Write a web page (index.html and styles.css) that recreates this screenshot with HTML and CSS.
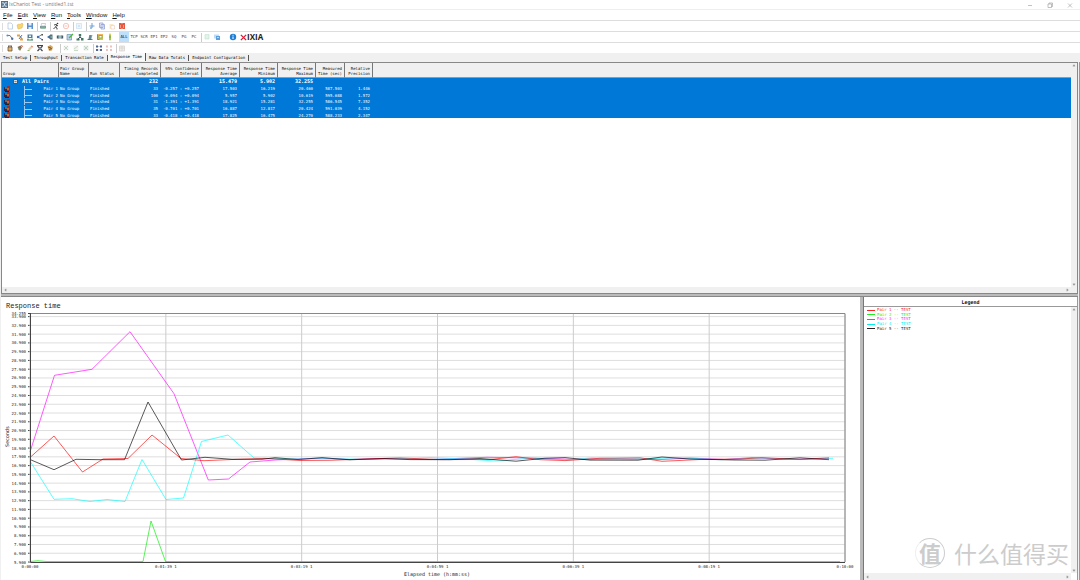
FILE: index.html
```html
<!DOCTYPE html>
<html lang="en">
<head>
<meta charset="utf-8">
<title>IxChariot Test - untitled1.tst</title>
<link rel="stylesheet" href="styles.css">
</head>
<body>
<div class="app">
  <header class="titlebar">
    <svg class="app-icon" viewBox="0 0 8 8"><rect width="8" height="8" fill="#5d7f9e"/><path d="M1 2h2l1 2 1-2h2M1 6h2l1-2 1 2h2" stroke="#fff" fill="none" stroke-width=".8"/><path d="M0 0h8v8H0z" fill="none" stroke="#2e5f8c" stroke-width=".8"/></svg>
    <span class="title">IxChariot Test - untitled1.tst</span>
    <div class="window-controls">
      <button aria-label="Minimize"><svg viewBox="0 0 8 8"><path d="M2 4.5h4"/></svg></button>
      <button aria-label="Restore"><svg viewBox="0 0 8 8"><path d="M2 3h3.5v3.500H2zM3 3V2h3.500v3.500h-1"/></svg></button>
      <button aria-label="Close"><svg viewBox="0 0 8 8"><path d="M2 2.500l4 4M6 2.500l-4 4"/></svg></button>
    </div>
  </header>

  <nav class="menubar">
    <button><u>F</u>ile</button><button><u>E</u>dit</button><button><u>V</u>iew</button><button><u>R</u>un</button><button><u>T</u>ools</button><button><u>W</u>indow</button><button><u>H</u>elp</button>
  </nav>

  <div class="toolbar">
    <button aria-label="New"><svg viewBox="0 0 8 8"><path d="M2 1h3l1.500 1.500V7H2z" fill="#fff" stroke="#a9c0dc" stroke-width=".7"/></svg></button>
    <button aria-label="Open"><svg viewBox="0 0 8 8"><path d="M1 3l2-1 1 .5 2-1.500 1 1-1 4-4 1z" fill="#f6d573" stroke="#e0b040" stroke-width=".5"/></svg></button>
    <button aria-label="Save"><svg viewBox="0 0 8 8"><path d="M1 1h6v6H1z" fill="#5b8fd0"/><path d="M2.500 1h3v2.500h-3zM2.500 5h3v2h-3z" fill="#e8f0fa"/></svg></button>
    <i class="sep"></i>
    <button aria-label="Print"><svg viewBox="0 0 8 8"><path d="M1 4h6v2.500H1z" fill="#7f9a97"/><path d="M2.500 1.500h4L6 4H2z" fill="#fff" stroke="#9db3c8" stroke-width=".6"/><path d="M2 6h4" stroke="#6fc28c"/></svg></button>
    <i class="sep"></i>
    <button aria-label="Run"><svg viewBox="0 0 8 8"><circle cx="5.500" cy="1.500" r=".8" fill="#333"/><path d="M2 3l2-.5 1 .5-1.500 2L5 6v1.500M3.500 5L1.500 7M4.500 3l1.500 1" stroke="#333" fill="none" stroke-width=".9"/></svg></button>
    <button aria-label="Stop"><svg viewBox="0 0 8 8"><circle cx="4" cy="4" r="2.700" fill="#fff" stroke="#f7c4bc"/><path d="M2.500 4h3" stroke="#f7c4bc"/></svg></button>
    <i class="sep"></i>
    <button aria-label="Results"><svg viewBox="0 0 8 8"><path d="M1.500 1.500h5v5h-5zM3 3l2 2M5 3L3 5" fill="#eef5fc" stroke="#c9def2" stroke-width=".7"/></svg></button>
    <i class="sep"></i>
    <button aria-label="Cut"><svg viewBox="0 0 8 8"><path d="M4 1v5M1.500 4h5" stroke="#6f9fd8" fill="none"/><circle cx="3" cy="6" r="1" fill="#7bb0dd"/></svg></button>
    <button aria-label="Copy"><svg viewBox="0 0 8 8"><path d="M1.500 1h3.500v4.500H1.500zM3 2.500h3.500V7H3z" fill="#e9eefb" stroke="#8b95d0" stroke-width=".7"/></svg></button>
    <button aria-label="Paste"><svg viewBox="0 0 8 8"><path d="M1.500 2h4v5h-4z" fill="#fbe8c9"/><path d="M3 3.500h3.500V7H3z" fill="#fff" stroke="#e9c9bb" stroke-width=".6"/></svg></button>
    <button aria-label="Delete"><svg viewBox="0 0 8 8"><path d="M1 1h2.500l.5 1 .5-1H7v6H4.500L4 6l-.5 1H1z" fill="#e8583f"/><path d="M2.500 3v3M5.500 3v3" stroke="#f8b5a6" stroke-width=".7"/></svg></button>
  </div>

  <div class="toolbar">
    <button aria-label="Add pair"><svg viewBox="0 0 8 8"><path d="M1 2.500h3l2 3" fill="none" stroke="#777"/><circle cx="1.500" cy="2.500" r="1.100" fill="#5b8fd0"/><circle cx="6.200" cy="5.800" r="1.200" fill="#4b6fa5"/></svg></button>
    <button aria-label="Add VoIP pair"><svg viewBox="0 0 8 8"><path d="M1 1.500h3v2H1z" fill="#e9a23a"/><path d="M4 3l2 3M3 6l3-4" stroke="#5078ae"/><path d="M4 5.500h3v2H4z" fill="#e9a23a"/></svg></button>
    <button aria-label="Add video pair"><svg viewBox="0 0 8 8"><path d="M1.500 1.500h5V5h-5z" fill="#587b9c"/><path d="M3 2.500h2v1.500H3z" fill="#dff"/><path d="M2 7V5.500M6 7V5.500M1 7h6" stroke="#398259"/></svg></button>
    <button aria-label="Add multicast group"><svg viewBox="0 0 8 8"><path d="M6 1.500L2 4l4 2.500" fill="none" stroke="#69829d"/><circle cx="2" cy="4" r="1.200" fill="#446fae"/><path d="M5.500 1h1.500v1.500H5.500zM5.500 6H7v1.500H5.500z" fill="#555"/></svg></button>
    <button aria-label="Add video group"><svg viewBox="0 0 8 8"><path d="M1 4l3-2v4z" fill="#3d6fa5"/><path d="M4 1.500h2.500v5H4z" fill="#5a6f78"/><path d="M4.500 4h2" stroke="#8fe0c3"/></svg></button>
    <button aria-label="Add IPTV pair"><svg viewBox="0 0 8 8"><rect x=".8" y="2.500" width="2.800" height="3" fill="#46596e"/><rect x="4.400" y="2.500" width="2.800" height="3" fill="#46596e"/><path d="M2 4h4" stroke="#a6ecd1" stroke-width=".8"/></svg></button>
    <button aria-label="Edit pair"><svg viewBox="0 0 8 8"><path d="M1 1.500h4.500V7H1z" fill="#bcd5ea" stroke="#5487ac" stroke-width=".6"/><path d="M3 5l4-4" stroke="#51b53a" stroke-width="1.300"/></svg></button>
    <button aria-label="Replicate"><svg viewBox="0 0 8 8"><path d="M4 1v3L1.500 6.500M4 4l3 2.500" fill="none" stroke="#344c63"/><path d="M.5 5.500h3v2h-3zM5 5h2.500v2.500H5zM2.800 1h2.400v2H2.800z" fill="#3e785e"/></svg></button>
    <button aria-label="Swap endpoints"><svg viewBox="0 0 8 8"><path d="M2 7l1.500-5h3L5 7z" fill="#7aa7a2"/><path d="M1.500 6.500h5M4 2v4" stroke="#456087" stroke-width=".8"/></svg></button>
    <button aria-label="Scripts"><svg viewBox="0 0 8 8"><path d="M1 1h6v6H1z" fill="#f2b65d"/><path d="M2.500 2h4v3.500h-4z" fill="#64c84d"/><path d="M3.500 3h2v1.500h-2z" fill="#fff"/><path d="M1.500 1.500v5h2" stroke="#e84f59" stroke-width=".8" fill="none"/></svg></button>
    <button aria-label="Advice"><svg viewBox="0 0 8 8"><path d="M4 .8v6.500" stroke="#9bc03f" stroke-width="1.800"/><path d="M3.500 4h1" stroke="#597b28"/><path d="M3.500 1.500h1" stroke="#ffe27a"/></svg></button>
    <div class="filters">
      <button class="filter active">ALL</button><button class="filter">TCP</button><button class="filter">SCR</button><button class="filter">EP1</button><button class="filter">EP2</button><button class="filter">SQ</button><button class="filter">PG</button><button class="filter">PC</button>
    </div>
    <i class="sep"></i>
    <button aria-label="Collapse"><svg viewBox="0 0 8 8"><path d="M2 1.500h4V6H2z" fill="#e2f3e8" stroke="#bfe0d2" stroke-width=".6"/></svg></button>
    <button aria-label="Expand"><svg viewBox="0 0 8 8"><path d="M1 1.500h5v4H1z" fill="#bfdcf5"/><path d="M3 3h4v4H3z" fill="#5b9fe0"/><path d="M4 4.500h2" stroke="#fff" stroke-width=".6"/></svg></button>
    <div class="brand">
      <button aria-label="About"><svg viewBox="0 0 8 8"><circle cx="4" cy="4" r="3.200" fill="#1f7fd6"/><path d="M4 3.500V6M4 1.800v1" stroke="#fff"/></svg></button>
      <span class="ixia"><svg viewBox="0 0 8 8"><path d="M1 1l6 6M7 1L1 7" stroke="#d9203a" stroke-width="1.600"/></svg>IXIA</span>
    </div>
  </div>

  <div class="toolbar last">
    <button aria-label="Hold"><svg viewBox="0 0 8 8"><path d="M2 3h4v4H2z" fill="#e6b56b" stroke="#5a4630" stroke-width=".7"/><path d="M2.500 3V1.500M4 3V1M5.500 3V1.500" stroke="#5a4630" stroke-width=".8"/></svg></button>
    <button aria-label="Release"><svg viewBox="0 0 8 8"><path d="M1.500 3l3-1.500 1.500 2L4 7z" fill="#8d6f4e"/><path d="M5 1.500l2 1" stroke="#e25745"/><path d="M2 5h2" stroke="#54a368"/></svg></button>
    <button aria-label="Mark"><svg viewBox="0 0 8 8"><path d="M2 5l3-3 1.500 1.500-3 3z" fill="#e6d2b0"/><path d="M5 2l2 1" stroke="#e47b5e"/><path d="M1.500 6.500h2" stroke="#90b570"/></svg></button>
    <button aria-label="Unmark all"><svg viewBox="0 0 8 8"><path d="M1 1.500h6M1.500 2l5 5M6.500 2l-5 5" stroke="#44423f" stroke-width="1.200"/><circle cx="4" cy="4.500" r="1.200" fill="#7b8fa5"/></svg></button>
    <button aria-label="Mark all"><svg viewBox="0 0 8 8"><path d="M1.500 2.500l3-1.500 2.500 2-1 3.500-3 .5z" fill="#d9a75b"/><path d="M2 3l3 1M3 5.500l3-1" stroke="#674a31" stroke-width=".8"/></svg></button>
    <i class="sep wide"></i>
    <button aria-label="Check"><svg viewBox="0 0 8 8"><path d="M1.500 1.500h5v5h-5z" fill="#f1f4f1"/><path d="M2 2l4 4M6 2L2 6" stroke="#b9cfbd" stroke-width=".8"/></svg></button>
    <button aria-label="Validate"><svg viewBox="0 0 8 8"><path d="M1.500 1.500h5v5h-5z" fill="#f1f4f1"/><path d="M2 5l4-3M2 6.500h4" stroke="#bcd3bd" stroke-width=".8"/></svg></button>
    <button aria-label="Verify"><svg viewBox="0 0 8 8"><path d="M1.500 1.500h5v5h-5z" fill="#e8efe8"/><path d="M2 2l4 4M6 2L2 6" stroke="#b3ccb5" stroke-width=".8"/></svg></button>
    <i class="sep"></i>
    <button aria-label="Group"><svg viewBox="0 0 8 8"><path d="M1 1.500h2v2H1zM5 1.500h2v2H5zM1 5h2v2H1zM5 5h2v2H5z" fill="#52658f"/><path d="M3 2.500h2M3 6h2" stroke="#9fb0cf" stroke-width=".6"/></svg></button>
    <button aria-label="Ungroup"><svg viewBox="0 0 8 8"><path d="M1 1.500h2v2H1zM5 1.500h2v2H5zM1 5h2v2H1zM5 5h2v2H5z" fill="#ecc2bd"/></svg></button>
    <i class="sep"></i>
    <button aria-label="Columns"><svg viewBox="0 0 8 8"><path d="M1.500 2h5v5h-5zM1.500 4h5M4 2v5" fill="#f1efec" stroke="#d3d0cc" stroke-width=".7"/></svg></button>
  </div>

  <nav class="tabs">
    <button>Test Setup</button><button>Throughput</button><button>Transaction Rate</button><button class="current">Response Time</button><button>Raw Data Totals</button><button>Endpoint Configuration</button>
  </nav>

  <main class="workspace">
    <section class="results">
      <div class="results-view">
        <table class="pairs">
          <colgroup><col class="c-group"><col class="c-name"><col class="c-status"><col class="c-records"><col class="c-ci"><col class="c-rt"><col class="c-rt"><col class="c-rt"><col class="c-time"><col class="c-prec"><col></colgroup>
          <thead>
            <tr><th class="left">Group</th><th class="left">Pair Group<br>Name</th><th class="left">Run Status</th><th>Timing Records<br>Completed</th><th>95% Confidence<br>Interval</th><th>Response Time<br>Average</th><th>Response Time<br>Minimum</th><th>Response Time<br>Maximum</th><th>Measured<br>Time (sec)</th><th>Relative<br>Precision</th><th class="rest"></th></tr>
          </thead>
          <tbody id="pair-rows">
            <tr class="total"><td class="left"><div class="all"><span class="toggle">−</span>All Pairs</div></td><td></td><td></td><td>232</td><td></td><td>15.479</td><td>5.902</td><td>32.255</td><td></td><td></td><td></td></tr>
          </tbody>
        </table>
      </div>
      <div class="vscroll"><span class="chev up"></span><span class="chev down"></span></div>
      <div class="hscroll"><span class="chev prev"></span><span class="chev next"></span></div>
    </section>
    <div class="splitter"></div>
    <section class="lower">
      <div class="chart-pane">
        <svg class="chart" viewBox="1 297 859 283" preserveAspectRatio="xMinYMin meet" role="img" aria-label="Response time">
          <text class="chart-title" x="6" y="308">Response time</text>
          <g id="grid"></g>
          <path class="axis-light" d="M30 313.500H845V562"/>
          <g id="series"></g>
          <path class="axis" d="M30.500 313V562.500H845"/>
          <text class="axis-title" transform="translate(9 447) rotate(-90)">Seconds</text>
          <text class="axis-title" x="437" y="576" text-anchor="middle">Elapsed time (h:mm:ss)</text>
        </svg>
      </div>
      <div class="vsplitter"></div>
      <aside class="legend">
        <h2>Legend</h2>
        <div class="legend-body">
          <ul>
            <li class="s1">Pair 1 -- TEST</li>
            <li class="s2">Pair 2 -- TEST</li>
            <li class="s3">Pair 3 -- TEST</li>
            <li class="s4">Pair 4 -- TEST</li>
            <li class="s5">Pair 5 -- TEST</li>
          </ul>
        </div>
        <div class="vscroll"><span class="chev up"></span><span class="chev down"></span></div>
        <div class="hscroll"><span class="chev prev"></span><span class="chev next"></span></div>
      </aside>
    </section>
  </main>
  <div class="watermark"><span class="seal">值</span><span>什么值得买</span></div>
</div>
<script src="app.js"></script>
</body>
</html>
```
FILE: styles.css
```css
* { box-sizing: border-box; }
body { margin: 0; font-family: "DejaVu Sans Mono", monospace; font-size: 4px; color: #222; background: #fff; }
button { border: 0; background: none; padding: 0; margin: 0; font: inherit; color: inherit; }
.app { position: relative; display: flex; flex-direction: column; height: 100vh; overflow: hidden; }

.titlebar { display: flex; align-items: center; height: 10px; border-bottom: 1px solid #eee; font: 5px/9px "Open Sans", sans-serif; color: #777; }
.app-icon { width: 7px; height: 7px; margin: 0 1px; }
.window-controls { margin-left: auto; display: flex; gap: 12px; padding-right: 6px; }
.window-controls svg { width: 8px; height: 8px; display: block; fill: none; stroke: #999; stroke-width: .6; }

.menubar { display: flex; gap: 5px; height: 11px; padding-left: 3px; border-bottom: 1px solid #ddd; font: 6px/10px "Liberation Sans", sans-serif; color: #111; }

.toolbar { display: flex; align-items: center; height: 11px; padding-left: 5px; border-bottom: 1px solid #ddd; background: linear-gradient(#ddd, #ddd) 2px 2px / 1px 7px no-repeat; }
.toolbar.last { height: 10px; border-bottom: 0; }
.toolbar button { width: 10px; height: 10px; display: flex; align-items: center; justify-content: center; }
.toolbar button svg { width: 8px; height: 8px; }
.sep { width: 3px; height: 9px; border-right: 1px solid #ccc; }
.sep.wide { width: 6px; }
.filters { display: flex; margin-left: 4px; line-height: 10px; color: #444; }
.filters .active { background: #bfe0fb; color: #000; }
.brand { display: flex; align-items: center; margin-left: 6px; }
.ixia { display: flex; align-items: center; margin-left: 2px; font: bold 8px/10px "Open Sans", sans-serif; color: #222; }
.ixia svg { width: 7px; height: 7px; }

.tabs { display: flex; align-items: center; height: 9px; background: #f0f0f0; color: #000; }
.tabs button { padding: 0 3px; line-height: 6px; border-right: 1px solid #555; }
.tabs .current { align-self: flex-start; height: 8px; background: #f8f8f8; }

.workspace { flex: 1; min-height: 0; display: grid; grid-template-rows: 231fr 4px 283fr; padding: 0 1px; border-right: 1px solid #999; background: #f0f0f0; }
.results { display: grid; grid-template: 1fr 6px / 1fr 6px; min-height: 0; border: 1px solid #888; border-width: 1px 1px 0; }
.results-view { background: #fff; overflow: hidden; }
.splitter { background: #bbb; border: 1px solid #888; border-width: 1px 0; }

.pairs { width: 100%; border-collapse: separate; border-spacing: 0; table-layout: fixed; line-height: 5px; }
.c-group { width: 57px; }
.c-name { width: 30px; }
.c-status { width: 31px; }
.c-records, .c-ci { width: 41px; }
.c-rt { width: 38px; }
.c-time { width: 29px; }
.c-prec { width: 28px; }
.pairs th { height: 15px; padding: 0 2px 1px 1px; vertical-align: bottom; text-align: right; font-weight: normal; white-space: nowrap; background: #f0f0f0; color: #111; border-right: 1px solid #777; border-bottom: 1px solid #999; }
.pairs .rest { border-right: 0; }
.pairs td { height: 7px; padding: 0 3px 0 0; text-align: right; white-space: nowrap; color: #fff; background: #0078d7; }
.pairs tr:nth-child(3n) td { height: 6px; }
.pairs .left { text-align: left; padding: 0 0 1px 1px; }
.pairs td.left { padding-bottom: 0; }
.total { font-size: 5px; font-weight: bold; }
.all { display: flex; align-items: center; padding-left: 10px; gap: 4px; }
.toggle { width: 5px; height: 5px; background: #ddd; color: #222; border: 1px solid #555; font-size: 4px; line-height: 3px; text-align: center; }
.pair { display: flex; align-items: center; padding-left: 1px; height: 6px; }
.pair svg { width: 6px; height: 6px; }
.branch { align-self: stretch; width: 8px; margin-left: 14px; border-left: 1px solid #9cc9ef; background: linear-gradient(#9cc9ef, #9cc9ef) 0 3px / 8px 1px no-repeat; }
.pair .label { margin-left: auto; padding-right: 1px; }

.vscroll, .hscroll { display: flex; align-items: center; justify-content: space-between; background: #f0f0f0; }
.vscroll { flex-direction: column; padding: 2px 0; }
.hscroll { padding: 0 3px; }
.chev { width: 2px; height: 2px; border: solid #999; border-width: 1px 0 0 1px; }
.up { transform: rotate(45deg); }
.down { transform: rotate(225deg); }
.prev { transform: rotate(-45deg); }
.next { transform: rotate(135deg); }

.lower { display: grid; grid-template-columns: 1fr 4px 214px; min-height: 0; }
.chart-pane { background: #fff; min-height: 0; overflow: hidden; }
.chart { display: block; width: 100%; height: 100%; }
.chart text { font-family: "DejaVu Sans Mono", monospace; fill: #222; }
.chart .chart-title { font-family: "Liberation Mono", monospace; font-size: 7px; }
.chart .axis-title { font-size: 5px; }
.chart .tick { font-size: 4px; }
.gridline { stroke: #dedede; }
.gridline.v { stroke: #ccc; }
.axis-light { fill: none; stroke: #888; }
.axis { fill: none; stroke: #444; }
.line { fill: none; stroke-width: 1; stroke-opacity: .65; }
.vsplitter { background: #bbb; border-right: 1px solid #777; }

.legend { display: grid; grid-template: 10px 1fr 7px / 1fr 6px; background: #fff; border-right: 1px solid #999; }
.legend h2 { grid-column: 1 / -1; margin: 0; font: bold 5px/10px "DejaVu Sans Mono", monospace; text-align: center; color: #111; border-bottom: 1px solid #999; }
.legend ul { display: grid; grid-auto-rows: 1fr; height: 23px; margin: 1px 0 0; padding: 0 0 0 3px; list-style: none; }
.legend li { display: flex; align-items: center; gap: 2px; line-height: 4px; stroke: none; }
.legend li::before { content: ""; width: 8px; height: 1px; background: currentColor; }
.s1 { color: #f22; stroke: #f00; }
.s2 { color: #2e2; stroke: #0e0; }
.s3 { color: #f2f; stroke: #f0f; }
.s4 { color: #0ee; stroke: #0ff; }
.s5 { color: #222; stroke: #000; }

.watermark { position: absolute; right: 11px; bottom: 12px; display: flex; align-items: center; gap: 9px; font: 23px/30px "Noto Sans CJK SC", sans-serif; color: #ccc; }
.seal { width: 30px; height: 30px; border: 1px solid #ccc; border-left-color: #eee; border-radius: 50%; font-size: 22px; line-height: 26px; text-align: center; font-weight: bold; }
```
FILE: app.js
```js
const rows = [
  ['33', '-0.257 : +0.257', '17.503', '16.219', '20.460', '587.503', '1.446'],
  ['100', '-0.094 : +0.094', '5.957', '5.902', '10.619', '595.688', '1.572'],
  ['31', '-1.391 : +1.391', '18.921', '15.281', '32.255', '586.545', '7.352'],
  ['35', '-0.701 : +0.701', '16.887', '12.817', '20.424', '591.039', '4.152'],
  ['33', '-0.418 : +0.418', '17.825', '16.475', '24.270', '588.233', '2.347'],
];
const icon = '<svg viewBox="0 0 6 6"><path d="M0 1h3v4H0z" fill="#222a55"/><path d="M3 0h3v5H3z" fill="#a22b2b"/><path d="M1 2h2M3 3h2" stroke="#f0c040" stroke-width=".8"/><path d="M1 5.500h4" stroke="#222"/></svg>';
document.getElementById('pair-rows').insertAdjacentHTML('beforeend', rows.map((r, i) =>
  `<tr><td class="left"><div class="pair">${icon}<span class="branch"></span><span class="label">Pair ${i + 1}</span></div></td>` +
  `<td class="left">No Group</td><td class="left">Finished</td>${r.map(v => `<td>${v}</td>`).join('')}<td></td></tr>`).join(''));

const plotTop = 313.5, plotBottom = 562, maxValue = 34.255, minValue = 5.9;
const toY = v => plotBottom - (v - minValue) * (plotBottom - plotTop) / (maxValue - minValue);
const label = (v, py) => `<text class="tick" x="26" y="${py + 1.5}" text-anchor="end">${v.toFixed(3)}</text><path class="axis" d="M28 ${py}h2"/>`;
let grid = '';
for (let v = minValue; v < maxValue; v += 1) {
  const py = toY(v);
  grid += `<path class="gridline" d="M31 ${py}H845"/>` + label(v, py);
}
grid += label(maxValue, plotTop);
['0:00:00', '0:01:39 1', '0:03:19 1', '0:04:59 1', '0:06:39 1', '0:08:19 1', '0:10:00'].forEach((t, i) => {
  const px = 30 + i * 815 / 6;
  grid += `<path class="gridline v" d="M${px} 314V562"/><text class="tick" x="${px}" y="568" text-anchor="middle">${t}</text>`;
});
document.getElementById('grid').innerHTML = grid;

const series = {
  s2: '30,561.5 38,560.7 46,561.5 143,561.5 151,521 165.5,561.5 840,561.5',
  s3: '30,452 54.500,375.3 92,369.3 130,331.7 174,393.7 208.3,480 228.5,479 250,462 275,460 322,458 350,459.5 380,458.6 430,459.5 487,457.3 530,458 570,459.3 620,459 662,459.5 690,458 725,459.5 752,457.6 790,459.4 829,458.5',
  s4: '30,461 54,499.3 72,498.7 90,501.5 107,499.5 125,501.5 142,459.5 166,499.5 183.5,498 201.5,441.5 228,435 254,458 290,459 330,458.7 380,459.5 430,457.6 465,459 496,461 530,458.2 570,460 592,457.8 630,459 680,457.8 720,459.7 760,458 800,459.5 833,458.3',
  s1: '30,457.5 54,436 82.500,472 103,459 128,458.5 152,435 181,458.5 204,460.7 232,459.5 265,458.4 300,460.5 330,460.3 365,459 400,457.9 440,459.6 490,459.5 516,456.7 540,459.7 565,460.6 600,458.3 640,457.8 662,461.3 700,459.5 740,459 762,457.7 800,459.5 829,457.8',
  s5: '30,459.5 54,469.7 76,459.3 100,459.7 124.500,459.7 148,402 181.500,460 205,457.3 232,459.3 262,459.3 275,457.7 298,459.5 322,457.7 350,459.8 385,458.5 410,459.6 450,459.7 480,458.5 516,461.2 545,458.2 565,457.6 590,460.1 638,460.2 662,457 690,459 735,460 765,460.2 800,457.8 829,459.7',
};
document.getElementById('series').innerHTML = Object.entries(series)
  .map(([name, points]) => `<polyline class="line ${name}" points="${points}"/>`).join('');
```
